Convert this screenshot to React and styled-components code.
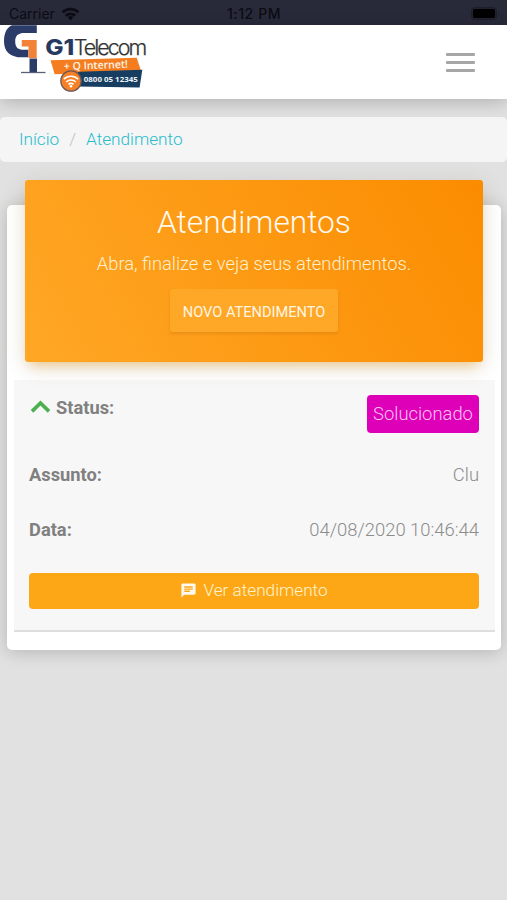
import React from 'react';
import styled, { createGlobalStyle } from 'styled-components';
import { MdChat } from 'react-icons/md';

const GlobalStyle = createGlobalStyle`
  * {
    box-sizing: border-box;
  }
  body {
    margin: 0;
    background: #e1e1e1;
    font-family: Roboto, 'Liberation Sans', sans-serif;
    font-weight: 300;
    color: #8c8c8c;
  }
  h1, p {
    margin: 0;
    font-weight: 300;
  }
`;

const Page = styled.div`
  width: 100%;
  height: 900px;
  overflow: hidden;
`;

const StatusBar = styled.div`
  display: grid;
  grid-template-columns: 1fr auto 1fr;
  align-items: center;
  height: 25px;
  padding: 2px 8px 0 9px;
  background: #282a3a;
  color: #0b0c14;
  font: 400 14px/20px Inter, sans-serif;
`;

const Carrier = styled.div`
  display: flex;
  align-items: center;
  gap: 6px;
`;

const Clock = styled.div`
  font-size: 14px;
  font-weight: 500;
  letter-spacing: 0.6px;
`;

const Battery = styled.svg`
  justify-self: end;
`;

const Header = styled.header`
  position: relative;
  display: flex;
  justify-content: space-between;
  align-items: center;
  height: 74px;
  padding-right: 32px;
  background: #fff;
  box-shadow: 0 4px 16px rgba(0, 0, 0, 0.2);
`;

const MenuButton = styled.button`
  display: flex;
  flex-direction: column;
  gap: 5px;
  padding: 0;
  border: 0;
  background: none;
  span {
    width: 29px;
    height: 3px;
    border-radius: 1px;
    background: #a6a6a6;
  }
`;

const Breadcrumb = styled.nav`
  display: flex;
  height: 45px;
  margin-top: 18px;
  padding: 0 19px;
  border-radius: 5px;
  background: #f5f5f5;
  font-size: 17.2px;
  line-height: 45px;
  a {
    color: #28bccd;
    text-decoration: none;
  }
  a + a::before {
    content: '/';
    padding: 0 10px;
    color: #c0c0c0;
  }
`;

const Card = styled.main`
  height: 445px;
  margin: 43px 6px 0 7px;
  padding: 0 6px 0 7px;
  border-radius: 5px;
  background: #fff;
  box-shadow: 0 2px 18px rgba(0, 0, 0, 0.2);
`;

const CardHeader = styled.div`
  position: relative;
  top: -25px;
  display: flex;
  flex-direction: column;
  align-items: center;
  height: 182px;
  margin: 0 12px 0 11px;
  padding-top: 21px;
  border-radius: 3px;
  background: linear-gradient(60deg, #ffa726, #fb8c00);
  box-shadow: 0 5px 22px rgba(90, 80, 45, 0.16),
    0 8px 12px -5px rgba(255, 152, 0, 0.4);
  color: #fffaf0;
`;

const Title = styled.h1`
  font-size: 31.7px;
  line-height: 44px;
`;

const Subtitle = styled.p`
  font-size: 18.35px;
  line-height: 24px;
  margin-top: 7px;
  color: #fff0cf;
`;

const NewButton = styled.button`
  width: 168px;
  height: 43px;
  margin-top: 13px;
  padding: 3px 0 0;
  border: 0;
  border-radius: 3px;
  background: #ffa726;
  box-shadow: 0 2px 3px rgba(190, 110, 20, 0.3);
  color: #fff6e3;
  font: 400 14.6px/20px Roboto, sans-serif;
`;

const Ticket = styled.section`
  height: 252px;
  margin-top: -7px;
  padding: 15px 16px 0 15px;
  border-bottom: 2px solid #dedede;
  background: #f7f7f7;
`;

const Row = styled.div`
  display: flex;
  justify-content: space-between;
  align-items: flex-start;
  height: ${props => props.$height}px;
  font-size: 18.3px;
  line-height: 24px;
`;

const Label = styled.span`
  display: flex;
  align-items: center;
  gap: 5px;
  margin-top: ${props => props.$top || 0}px;
  color: #808080;
  font-weight: 700;
`;

const Value = styled.span`
  font-size: 18.4px;
  color: #8c8c8c;
`;

const Badge = styled.span`
  width: 112px;
  height: 38px;
  border-radius: 4px;
  background: #de00b8;
  color: #ffc4f4;
  font-size: 18.4px;
  line-height: 37px;
  text-align: center;
`;

const ViewButton = styled.button`
  display: flex;
  justify-content: center;
  align-items: center;
  gap: 6px;
  width: 100%;
  height: 36px;
  padding: 0 0 2px;
  border: 0;
  border-radius: 4px;
  background: #fda717;
  color: #fff3d0;
  font: 300 17.2px/34px Roboto, sans-serif;
  svg {
    color: #fffaf0;
  }
`;

const Wifi = () => (
  <svg width="19" height="14" viewBox="0 0 19 14">
    <g fill="none" stroke="currentColor" strokeWidth="2.8">
      <path d="M1.6 5.3a11.2 11.2 0 0 1 15.8 0" />
      <path d="M4.8 8.8a6.7 6.7 0 0 1 9.4 0" />
    </g>
    <path fill="currentColor" d="M6.7 10.4a4 4 0 0 1 5.6 0L9.5 13.4z" />
  </svg>
);

const Logo = () => (
  <svg width="160" height="74" viewBox="0 25 160 74">
    <path
      d="M36.8 25.2V33H25c-7.2 0-9.8 2.6-9.8 8.4 0 6 3 8.3 8.5 8.3h4.7v7.6H22C10.3 57.3 4 51.6 4 41.4 4 33.5 6.5 27.5 12 25.2z"
      fill="#2b3c68"
    />
    <path d="M21.8 40h14.9v18h-8.2V46.6h-6.7z" fill="#f28237" />
    <path d="M29.5 58.5h7.5V72h-7.5z" fill="#2b3c68" />
    <path d="M21 72.5h24.5" stroke="#596078" strokeWidth="1.3" />
    <text
      x="45.2"
      y="54.7"
      fontFamily="Inter, sans-serif"
      fontSize="21.5"
      fontWeight="800"
      fill="#263960"
      textLength="29"
      lengthAdjust="spacingAndGlyphs"
    >
      G1
    </text>
    <text
      x="73.8"
      y="54.7"
      fontFamily="Inter, sans-serif"
      fontSize="21.5"
      fontWeight="300"
      fill="#333"
      stroke="#333"
      strokeWidth="0.25"
      textLength="73.5"
      lengthAdjust="spacing"
    >
      Telecom
    </text>
    <path d="M50.5 60.2l86.2-2.4 4.2 12.7-15 .8-71.2 2.9z" fill="#f47d20" />
    <path d="M78 71.7l64.3-2-2.7 17.8-61.6-1z" fill="#173e61" />
    <text
      x="64"
      y="70"
      transform="rotate(-2 64 70)"
      fontFamily="Open Sans, sans-serif"
      fontSize="10.6"
      fontWeight="600"
      fill="#fff4e8"
      textLength="64"
      lengthAdjust="spacingAndGlyphs"
    >
      + Q Internet!
    </text>
    <text
      x="83.8"
      y="82"
      fontFamily="Open Sans, sans-serif"
      fontSize="7.4"
      fontWeight="700"
      fill="#eef3f8"
      textLength="54"
      lengthAdjust="spacingAndGlyphs"
    >
      0800 05 12345
    </text>
    <circle cx="71" cy="81" r="10.2" fill="#f58025" stroke="#6a5755" strokeWidth="1.2" />
    <g fill="none" stroke="#fff" strokeWidth="1.6">
      <path d="M63.8 79.3a10.2 10.2 0 0 1 14.4 0" />
      <path d="M66.2 82a6.8 6.8 0 0 1 9.6 0" />
      <path d="M68.5 84.4a3.5 3.5 0 0 1 5 0" />
    </g>
    <circle cx="71" cy="86.2" r="1.3" fill="#fff" />
  </svg>
);

const App = () => (
  <Page>
    <GlobalStyle />
    <StatusBar>
      <Carrier>
        Carrier
        <Wifi />
      </Carrier>
      <Clock>1:12 PM</Clock>
      <Battery width="28" height="13" viewBox="0 0 28 13">
        <rect x="0.5" y="0.5" width="25" height="12" rx="3.5" fill="#222331" stroke="#1d1e2a" />
        <rect x="2" y="2" width="22" height="9" rx="2" fill="#000" />
        <path d="M27 4.5c1 .8 1 3.2 0 4z" fill="#1d1e2a" />
      </Battery>
    </StatusBar>
    <Header>
      <Logo />
      <MenuButton aria-label="Menu">
        <span />
        <span />
        <span />
      </MenuButton>
    </Header>
    <Breadcrumb>
      <a href="#inicio">Início</a>
      <a href="#atendimento">Atendimento</a>
    </Breadcrumb>
    <Card>
      <CardHeader>
        <Title>Atendimentos</Title>
        <Subtitle>Abra, finalize e veja seus atendimentos.</Subtitle>
        <NewButton>NOVO ATENDIMENTO</NewButton>
      </CardHeader>
      <Ticket>
        <Row $height={68}>
          <Label $top={1}>
            <svg width="22" height="16" viewBox="0 0 22 16">
              <path d="M3 11.4L11.5 3l8.5 8.4" fill="none" stroke="#4caf50" strokeWidth="3.6" />
            </svg>
            Status:
          </Label>
          <Badge>Solucionado</Badge>
        </Row>
        <Row $height={55}>
          <Label>Assunto:</Label>
          <Value>Clu</Value>
        </Row>
        <Row $height={55}>
          <Label>Data:</Label>
          <Value>04/08/2020 10:46:44</Value>
        </Row>
        <ViewButton>
          <MdChat size={17} />
          Ver atendimento
        </ViewButton>
      </Ticket>
    </Card>
  </Page>
);

export default App;
